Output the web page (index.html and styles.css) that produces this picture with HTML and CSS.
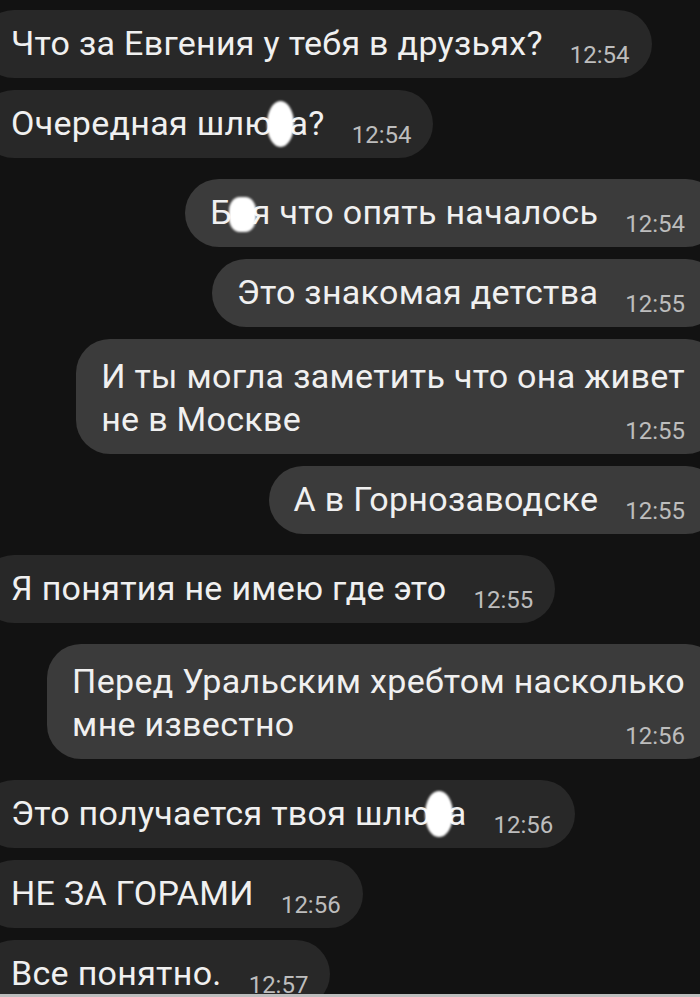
FILE: index.html
```html
<!DOCTYPE html>
<html lang="ru">
<head>
  <meta charset="UTF-8">
  <meta name="viewport" content="width=device-width, initial-scale=1.0">
  <title>Чат</title>
  <link rel="stylesheet" href="styles.css">
</head>
<body>

  <main class="chat">
    <!-- them -->
    <div class="row in">
      <div class="msg">
        <span class="text">Что за Евгения у тебя в друзьях?</span>
        <span class="time">12:54</span>
      </div>
    </div>
    <div class="row in same">
      <div class="msg">
        <span class="text">Очередная шлю<span class="blot">х</span>а?</span>
        <span class="time">12:54</span>
      </div>
    </div>

    <!-- me -->
    <div class="row out">
      <div class="msg">
        <span class="text">Б<span class="blot small">л</span>я что опять началось</span>
        <span class="time">12:54</span>
      </div>
    </div>
    <div class="row out same">
      <div class="msg">
        <span class="text">Это знакомая детства</span>
        <span class="time">12:55</span>
      </div>
    </div>
    <div class="row out same">
      <div class="msg multi">
        <div class="text">И ты могла заметить что она живет</div>
        <div class="last">
          <span class="text">не в Москве</span>
          <span class="time">12:55</span>
        </div>
      </div>
    </div>
    <div class="row out same">
      <div class="msg">
        <span class="text">А в Горнозаводске</span>
        <span class="time">12:55</span>
      </div>
    </div>

    <!-- them -->
    <div class="row in">
      <div class="msg">
        <span class="text">Я понятия не имею где это</span>
        <span class="time">12:55</span>
      </div>
    </div>

    <!-- me -->
    <div class="row out">
      <div class="msg multi">
        <div class="text">Перед Уральским хребтом насколько</div>
        <div class="last">
          <span class="text">мне известно</span>
          <span class="time">12:56</span>
        </div>
      </div>
    </div>

    <!-- them -->
    <div class="row in">
      <div class="msg">
        <span class="text">Это получается твоя шлю<span class="blot">х</span>а</span>
        <span class="time">12:56</span>
      </div>
    </div>
    <div class="row in same">
      <div class="msg">
        <span class="text">НЕ ЗА ГОРАМИ</span>
        <span class="time">12:56</span>
      </div>
    </div>
    <div class="row in same">
      <div class="msg">
        <span class="text">Все понятно.</span>
        <span class="time">12:57</span>
      </div>
    </div>
  </main>

  <div class="edge"></div>

</body>
</html>
```

FILE: styles.css
```css
* {
  box-sizing: border-box;
}

html, body {
  margin: 0;
  padding: 0;
  background: #121212;
  overflow: hidden;
}

body {
  font-family: Roboto, 'Liberation Sans', sans-serif;
  color: #f0f0f0;
}

.chat {
  display: flex;
  flex-direction: column;
  padding-top: 10px;
}

.row {
  display: flex;
  margin-top: 21px;
}

.row:first-child {
  margin-top: 0;
}

.row.same {
  margin-top: 12px;
}

.row.in {
  justify-content: flex-start;
  margin-left: -20px;
}

.row.out {
  justify-content: flex-end;
  margin-right: -20px;
}

.msg {
  display: flex;
  align-items: flex-end;
  height: 68px;
  padding: 0 22px 15px 31px;
  border-radius: 34px;
  background: #282828;
}

.out .msg {
  background: #3b3b3b;
  padding: 0 35px 15px 25px;
}

.text {
  font-size: 34px;
  line-height: 40px;
  letter-spacing: 0.3px;
  white-space: nowrap;
}

.time {
  margin-left: 27px;
  margin-bottom: -4px;
  font-size: 24px;
  line-height: 24px;
  color: #bdbdbd;
}

.msg.multi {
  display: block;
  height: 115px;
  padding-top: 16px;
  padding-bottom: 0;
}

.msg.multi .text {
  line-height: 43px;
}

.msg.multi .last {
  display: flex;
  justify-content: space-between;
  align-items: flex-end;
}

.msg.multi .time {
  margin-bottom: -2px;
}

.blot {
  position: relative;
}

.blot::after {
  content: '';
  position: absolute;
  left: -5px;
  right: -5px;
  top: -2px;
  bottom: -4px;
  border-radius: 50%;
  background: #fff;
  filter: blur(1px);
}

.blot.small::after {
  left: -3px;
  right: -4px;
  top: 5px;
  bottom: 0;
  border-radius: 40%;
}

.edge {
  position: fixed;
  left: 0;
  right: 0;
  bottom: 0;
  height: 3px;
  background: #bdbdbd;
}
```
